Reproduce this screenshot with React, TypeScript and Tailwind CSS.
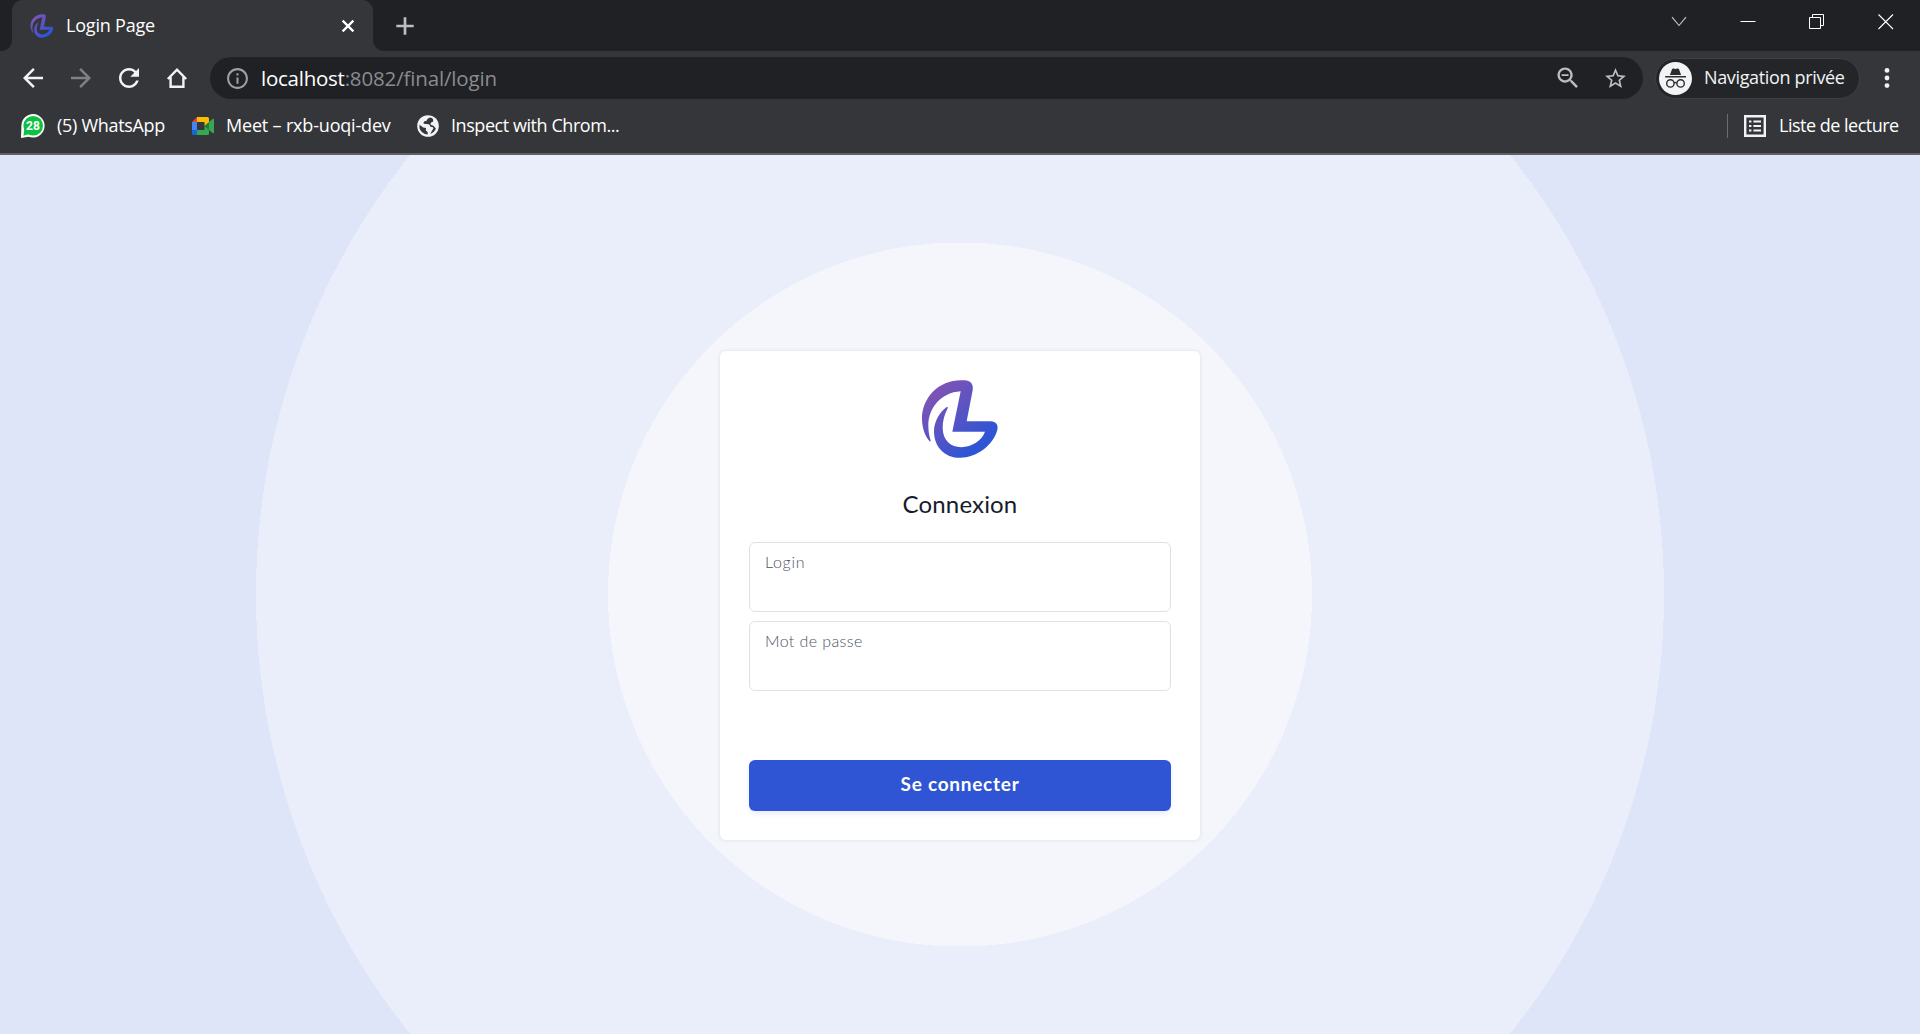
import type { ReactNode } from "react";

const chromeFont = "font-['Open_Sans','Noto_Sans',sans-serif]";

function Logo({ id, className }: { id: string; className: string }) {
  return (
    <svg viewBox="15 15 234 239" className={className} aria-hidden="true">
      <defs>
        <linearGradient id={id} x1="50" y1="60" x2="185" y2="215" gradientUnits="userSpaceOnUse">
          <stop offset="0" stopColor="#7c53b5" />
          <stop offset="1" stopColor="#2f55d4" />
        </linearGradient>
      </defs>
      <path
        fill={`url(#${id})`}
        d="M41 201C25 184 18 158 18 133C18 70 68 18 135 18H146C165 19 173 31 170 48L152 141H224C240 141 248 152 244 167C232 214 180 251 133 251C85 251 54 217 54 171C54 141 72 113 91 99C96 97 97 99 93 107C86 121 80 140 80 160C80 200 105 219 136 219C168 219 197 200 207 173H109L134 51C75 55 37 100 37 155C37 175 41 190 44 199Q44 203 41 201Z"
      />
    </svg>
  );
}

function MaterialIcon({ d, className }: { d: string; className: string }) {
  return (
    <svg viewBox="0 0 24 24" fill="currentColor" className={className} aria-hidden="true">
      <path d={d} />
    </svg>
  );
}

const icons = {
  back: "M20 11H7.83l5.59-5.59L12 4l-8 8 8 8 1.41-1.41L7.83 13H20v-2z",
  forward: "M12 4l-1.41 1.41L16.17 11H4v2h12.17l-5.58 5.59L12 20l8-8z",
  reload:
    "M17.65 6.35C16.2 4.9 14.21 4 12 4c-4.42 0-7.99 3.58-7.99 8s3.57 8 7.99 8c3.73 0 6.84-2.55 7.73-6h-2.08c-.82 2.33-3.04 4-5.65 4-3.31 0-6-2.69-6-6s2.69-6 6-6c1.66 0 3.14.69 4.22 1.78L13 11h7V4l-2.35 2.35z",
  info: "M11 7h2v2h-2zm0 4h2v6h-2zm1-9C6.48 2 2 6.48 2 12s4.48 10 10 10 10-4.48 10-10S17.52 2 12 2zm0 18c-4.41 0-8-3.59-8-8s3.59-8 8-8 8 3.59 8 8-3.59 8-8 8z",
  zoomOut:
    "M15.5 14h-.79l-.28-.27C15.41 12.59 16 11.11 16 9.5 16 5.91 13.09 3 9.5 3S3 5.91 3 9.5 5.91 16 9.5 16c1.61 0 3.09-.59 4.23-1.57l.27.28v.79l5 4.99L20.49 19l-4.99-5zm-6 0C7.01 14 5 11.99 5 9.5S7.01 5 9.5 5 14 7.01 14 9.5 11.99 14 9.5 14zM6.5 8.8h6v1.4h-6z",
  star: "M22 9.24l-7.19-.62L12 2 9.19 8.63 2 9.24l5.46 4.73L5.82 21 12 17.27 18.18 21l-1.63-7.03L22 9.24zM12 15.4l-3.76 2.27 1-4.28-3.32-2.88 4.38-.38L12 6.1l1.71 4.04 4.38.38-3.32 2.88 1 4.28L12 15.4z",
};

function TabStrip() {
  return (
    <div className="flex h-[51px] justify-between bg-[#202124]">
      <div className="flex">
        <div className="w-3 bg-[#35363a]">
          <div className="h-full rounded-br-[11px] bg-[#202124]" />
        </div>
        <div className="flex w-[361px] items-center rounded-t-[11px] bg-[#35363a] px-[18px]">
          <Logo id="tab-logo" className="mt-px h-6 w-6" />
          <span className="ml-[12px] grow pb-px text-lg leading-6 tracking-[-0.2px] text-white">Login Page</span>
          <svg viewBox="0 0 14 14" className="h-3.5 w-3.5" aria-hidden="true">
            <path d="M1.6 1.6 12.4 12.4M12.4 1.6 1.6 12.4" stroke="#fff" strokeWidth="2.3" />
          </svg>
        </div>
        <div className="bg-[#35363a]">
          <div className="flex h-full items-center rounded-bl-[11px] bg-[#202124] pl-[23px]">
            <svg viewBox="0 0 18 18" className="h-[18px] w-[18px]" aria-hidden="true">
              <path d="M9 .3V17.7M.3 9H17.7" stroke="#bdbec1" strokeWidth="2.7" />
            </svg>
          </div>
        </div>
      </div>
      <div className="mt-3.5 mr-[26px] flex items-start gap-[53px] text-white">
        <svg viewBox="0 0 16 16" className="h-4 w-4" fill="none" stroke="#c8c9cb" aria-hidden="true">
          <path d="m1 3.2 7 8.3 7-8.3" strokeWidth="1.1" />
        </svg>
        <svg viewBox="0 0 16 16" className="h-4 w-4" fill="none" stroke="currentColor" aria-hidden="true">
          <path d="M.5 7.5h15" />
        </svg>
        <svg viewBox="0 0 16 16" className="h-4 w-4" fill="none" stroke="currentColor" aria-hidden="true">
          <path d="M.5 3.5h11v11H.5zM3.5 3.5v-3h11v11h-3" />
        </svg>
        <svg viewBox="0 0 16 16" className="h-4 w-4" fill="none" stroke="currentColor" aria-hidden="true">
          <path d="m.5.5 14.5 14.5M15 .5.5 15" strokeWidth="1.1" />
        </svg>
      </div>
    </div>
  );
}

function Incognito() {
  return (
    <svg viewBox="0 0 33 33" className="h-[33px] w-[33px]" aria-hidden="true">
      <circle cx="16.5" cy="16.5" r="16.5" fill="#f1f3f4" />
      <path fill="#2b2c30" d="M10.9 13.1 12.9 7.4Q13.4 6.2 14.6 6.5L16.5 7 18.4 6.5Q19.6 6.2 20.1 7.4L22.1 13.1zM6.2 14h20.8v1.5H6.2z" />
      <g fill="none" stroke="#2b2c30" strokeWidth="1.4">
        <circle cx="11.4" cy="21.4" r="3.7" />
        <circle cx="21.6" cy="21.4" r="3.7" />
        <path d="M15.1 20.9q1.4-.9 2.8 0" />
      </g>
    </svg>
  );
}

function Toolbar() {
  return (
    <div className="flex h-[54px] items-center bg-[#35363a] pl-[18px] text-[#f1f3f4]">
      <div className="flex gap-[18px]">
        <MaterialIcon d={icons.back} className="h-[30px] w-[30px]" />
        <MaterialIcon d={icons.forward} className="h-[30px] w-[30px] text-[#808184]" />
        <MaterialIcon d={icons.reload} className="h-[30px] w-[30px]" />
        <svg viewBox="0 0 30 30" className="h-[30px] w-[30px]" fill="none" stroke="currentColor" strokeWidth="2.4" aria-hidden="true">
          <path d="M5.8 16 15 6.7 24.2 16M8.6 14v9.8h12.8V14" />
        </svg>
      </div>
      <div className="ml-[18px] flex h-[42px] w-[1433px] items-center rounded-full bg-[#202124] pr-[12px] pl-[14.5px]">
        <MaterialIcon d={icons.info} className="h-[25px] w-[25px] text-[#9aa0a6]" />
        <div className="ml-[11.5px] grow pb-px text-[20.5px] leading-6 tracking-[-0.15px] text-[#8a8c8f]">
          <span className="tracking-[-0.25px] text-white">localhost</span>:8082/final/login
        </div>
        <MaterialIcon d={icons.zoomOut} className="mr-[21px] h-7 w-7 text-[#bdbec1]" />
        <MaterialIcon d={icons.star} className="mr-[3px] h-[25px] w-[25px] text-[#bdbec1]" />
      </div>
      <div className="ml-[12px] flex h-[41px] w-[205px] items-center rounded-full border border-[#3f4044] bg-[#242529] pl-[3px]">
        <Incognito />
        <span className="ml-[12px] pb-[2px] text-lg leading-6 tracking-[-0.35px] whitespace-nowrap">Navigation privée</span>
      </div>
      <svg viewBox="0 0 6 22" className="ml-[24px] h-[22px] w-1.5" fill="currentColor" aria-hidden="true">
        <circle cx="3" cy="3.4" r="2.4" />
        <circle cx="3" cy="11" r="2.4" />
        <circle cx="3" cy="18.6" r="2.4" />
      </svg>
    </div>
  );
}

function WhatsAppIcon() {
  return (
    <svg viewBox="0 0 24 24" className="h-6 w-6" aria-hidden="true">
      <path fill="#fff" d="M12.2 0A11.8 11.8 0 1 1 7.5 22.8L0 24l.4-12A11.8 11.8 0 0 1 12.2 0z" />
      <circle cx="12.2" cy="11.8" r="9.8" fill="#0dc143" />
      <path fill="#0dc143" d="m3.4 15-1 6.7 6-1.6z" />
      <text x="12" y="16.2" textAnchor="middle" fontFamily="Roboto, sans-serif" fontSize="12" fontWeight="700" fill="#fff">
        28
      </text>
    </svg>
  );
}

function MeetIcon() {
  return (
    <svg viewBox="0 0 22 18" className="h-[18px] w-[22px]" aria-hidden="true">
      <path fill="#4285f4" d="M0 5h5v8H0z" />
      <path fill="#ea4335" d="M5 0v5H0z" />
      <path fill="#fbbc04" d="M5 0h10.5Q17 0 17 1.5V6l-4.5 3V5H5z" />
      <path fill="#1967d2" d="M0 13h5v5H1.5Q0 18 0 16.5z" />
      <path fill="#34a853" d="M5 13h7.5V9L17 12.5v4Q17 18 15.5 18H5z" />
      <path fill="#188038" d="M12.5 9 17 5v8z" />
      <path fill="#34a853" d="m17 5 3.5-3q1.5-.8 1.5.7v12.6q0 1.5-1.5.7L17 13z" />
    </svg>
  );
}

function GlobeIcon() {
  return (
    <svg viewBox="0 0 22 22" className="h-[22px] w-[22px]" aria-hidden="true">
      <circle cx="11" cy="11" r="10.8" fill="#f1f3f4" />
      <path
        fill="#35363a"
        d="M13.2 2.6 11.4 3.2Q9.8 4 10 5.6L7.6 6.2Q6.2 7 6.6 8.8L11.6 9.2Q13.4 9.8 13 11.4L16 12.2Q17 13.6 15.4 15L13.2 18.9Q17.6 17.5 18.9 13.6L16.4 10.8 13.6 9.8 13.8 7.8 16.2 6.6 16 4Q14.7 3 13.2 2.6zM2.5 9.8Q1.6 16.4 7.8 18.9L10.8 19.4 10.6 17 8.8 15.6 9 13 6.2 12.4z"
      />
    </svg>
  );
}

function Bookmark({ icon, children }: { icon: ReactNode; children: ReactNode }) {
  return (
    <div className="flex items-center">
      {icon}
      {children}
    </div>
  );
}

function BookmarksBar() {
  return (
    <div className="flex h-[50px] items-center justify-between border-b-2 border-[#5f6063] bg-[#35363a] pr-[20px] pb-[6px] pl-[21px] text-lg leading-6 text-white">
      <div className="flex items-center">
        <Bookmark icon={<WhatsAppIcon />}>
          <span className="ml-[12px] w-[122px] pb-[2px] tracking-[-0.3px] whitespace-nowrap">(5) WhatsApp</span>
        </Bookmark>
        <Bookmark icon={<span className="ml-[13px]"><MeetIcon /></span>}>
          <span className="ml-[12px] w-[191px] pb-[2px] tracking-[-0.18px] whitespace-nowrap">Meet – rxb-uoqi-dev</span>
        </Bookmark>
        <Bookmark icon={<GlobeIcon />}>
          <span className="ml-[12px] pb-[2px] tracking-[-0.44px] whitespace-nowrap">Inspect with Chrom...</span>
        </Bookmark>
      </div>
      <div className="flex items-center">
        <div className="h-6 w-px bg-[#6b6c70]" />
        <svg viewBox="0 0 22 22" className="ml-4 h-[22px] w-[22px] text-[#f1f3f4]" fill="none" stroke="currentColor" aria-hidden="true">
          <path strokeWidth="2.4" d="M1.2 1.2h19.6v19.6H1.2z" />
          <path strokeWidth="2.1" d="M5 6.5h2.4M9.4 6.5h7.6M5 11h2.4M9.4 11h7.6M5 15.5h2.4M9.4 15.5h7.6" />
        </svg>
        <span className="ml-[13px] w-[121px] pb-[2px] tracking-[-0.5px] whitespace-nowrap">Liste de lecture</span>
      </div>
    </div>
  );
}

function Field({ label, className }: { label: string; className: string }) {
  return (
    <div className="h-[70px] rounded-md border border-[#dee2e6] px-[15px] pt-[7px]">
      <span className={className}>{label}</span>
    </div>
  );
}

function LoginCard() {
  return (
    <div className="flex h-[489px] w-[480px] flex-col rounded-md bg-white px-[29px] pt-[28px] font-[Lato,sans-serif] shadow-[0_0_4px_rgba(60,72,88,0.13)]">
      <Logo id="card-logo" className="h-[80px] w-[78px] self-center" />
      <h1 className="mt-[29px] text-center text-2xl leading-8 tracking-[0.15px] text-[#161c2d]">Connexion</h1>
      <div className="mt-[22px] flex flex-col gap-[9px]">
        <Field label="Login" className="text-base leading-6 font-light tracking-[0.7px] text-[#4d5262]" />
        <Field label="Mot de passe" className="text-base leading-6 font-light tracking-[0.4px] text-[#4d5262]" />
      </div>
      <button className="mt-[69px] h-[51px] rounded-md bg-[#2f55d4] pb-[3px] text-[19px] leading-6 font-bold tracking-[0.75px] text-white shadow-[0_3px_5px_rgba(47,85,212,0.1)]">
        Se connecter
      </button>
    </div>
  );
}

export default function App() {
  return (
    <div className={`flex h-[1034px] w-[1920px] flex-col overflow-hidden ${chromeFont}`}>
      <TabStrip />
      <Toolbar />
      <BookmarksBar />
      <main className="flex grow items-end justify-center bg-[radial-gradient(circle_at_50%_50%,#f5f6fc_352px,#e9eefa_352px,#e9eefa_704px,#dfe5f9_704px)] pb-[194px]">
        <LoginCard />
      </main>
    </div>
  );
}
